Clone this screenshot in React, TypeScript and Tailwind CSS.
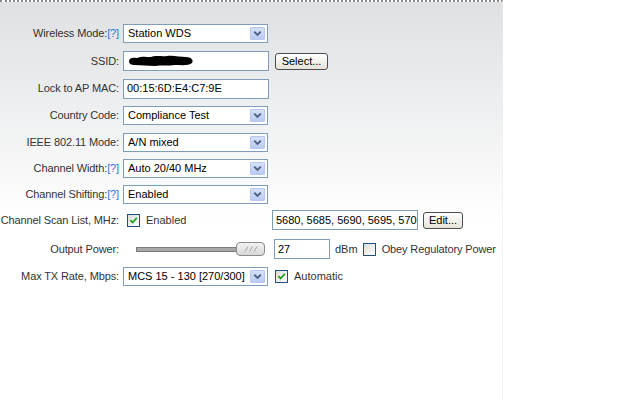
import React from 'react';

const font = { fontFamily: '"Liberation Sans", Arial, sans-serif' };

const Help = () => <span className="text-[#2f7ad0]">[?]</span>;

const Label: React.FC<{ children: React.ReactNode }> = ({ children }) => (
  <div className="w-[123px] shrink-0 pr-[4px] text-right text-[#333] whitespace-nowrap tracking-[-0.12px]">{children}</div>
);

const Arrow = () => (
  <div className="absolute right-[2px] top-[2px] bottom-[2px] w-[15px] rounded-[1px] border border-[#b7c8ec] bg-gradient-to-b from-[#d6e1f8] to-[#b9cbf1] flex items-center justify-center">
    <svg width="9" height="7" viewBox="0 0 9 7">
      <path d="M1.2 1.6 L4.5 4.9 L7.8 1.6" fill="none" stroke="#4d6185" strokeWidth="2" />
    </svg>
  </div>
);

const Select: React.FC<{ value: string }> = ({ value }) => (
  <div className="relative w-[145px] h-[19px] border border-[#7f9db9] bg-white flex items-center pl-[4px] text-black whitespace-nowrap">
    {value}
    <Arrow />
  </div>
);

const Input: React.FC<{ w: string; children?: React.ReactNode }> = ({ w, children }) => (
  <div className={`${w} h-[20px] border border-[#7f9db9] bg-white flex items-center pl-[3px] text-black whitespace-nowrap overflow-hidden`}>
    {children}
  </div>
);

const Button: React.FC<{ w: string; label: string }> = ({ w, label }) => (
  <div className={`${w} h-[17px] rounded-[3px] border border-[#4a4f55] bg-gradient-to-b from-white to-[#e6e3d6] flex items-center justify-center text-black`}>
    {label}
  </div>
);

const Check: React.FC<{ checked?: boolean }> = ({ checked }) => (
  <div className="w-[13px] h-[13px] shrink-0 border border-[#1c5180] bg-gradient-to-br from-[#dcdcd7] to-white flex items-center justify-center">
    {checked && (
      <svg width="9" height="9" viewBox="0 0 9 9">
        <path d="M1.3 4.2 L3.6 6.5 L7.8 1.8" fill="none" stroke="#21a121" strokeWidth="1.8" />
      </svg>
    )}
  </div>
);

export default function App() {
  return (
    <div className="w-[640px] h-[400px] bg-white text-[11px] leading-[13px]" style={font}>
      <div className="w-[503px] h-[400px] border-t-2 border-dotted border-[#8a8a8a] border-r border-r-[#ececec] bg-[linear-gradient(to_bottom,#dee0e2,#ffffff_220px)] pt-[17px]">
        <div className="flex items-center h-[28px]">
          <Label>Wireless Mode:<Help /></Label>
          <Select value="Station WDS" />
        </div>
        <div className="flex items-center h-[28px]">
          <Label>SSID:</Label>
          <Input w="w-[146px]">
            {/* redacted SSID scribble */}
            <svg width="66" height="12" viewBox="0 0 66 12" className="ml-[1px]">
              <path d="M1 6 C1 3 5 2 9 3 C13 1 19 2 23 2 C28 0 34 2 39 1 C45 0 52 2 58 2 C63 2 66 5 64 8 C61 11 53 10 47 10 C40 11 33 10 27 11 C20 11 13 10 7 10 C3 10 1 9 1 6 Z" fill="#000" />
            </svg>
          </Input>
          <div className="ml-[6px]"><Button w="w-[53px]" label="Select..." /></div>
        </div>
        <div className="flex items-center h-[27px]">
          <Label>Lock to AP MAC:</Label>
          <Input w="w-[146px]">00:15:6D:E4:C7:9E</Input>
        </div>
        <div className="flex items-center h-[27px]">
          <Label>Country Code:</Label>
          <Select value="Compliance Test" />
        </div>
        <div className="flex items-center h-[26px]">
          <Label>IEEE 802.11 Mode:</Label>
          <Select value="A/N mixed" />
        </div>
        <div className="flex items-center h-[26px]">
          <Label>Channel Width:<Help /></Label>
          <Select value="Auto 20/40 MHz" />
        </div>
        <div className="flex items-center h-[26px]">
          <Label>Channel Shifting:<Help /></Label>
          <Select value="Enabled" />
        </div>
        <div className="flex items-center h-[26px]">
          <Label>Channel Scan List, MHz:</Label>
          <div className="w-[149px] flex items-center pl-[4px]">
            <Check checked />
            <span className="ml-[6px] text-[#333]">Enabled</span>
          </div>
          <Input w="w-[146px]">5680, 5685, 5690, 5695, 5700</Input>
          <div className="ml-[5px]"><Button w="w-[40px]" label="Edit..." /></div>
        </div>
        <div className="flex items-center h-[32px]">
          <Label>Output Power:</Label>
          <div className="ml-[13px] flex items-center">
            <div className="w-[102px] h-[5px] border border-[#7a7a7a] bg-[#a8a8a8]" />
            <div className="-ml-[2px] w-[29px] h-[14px] rounded-[4px] border border-[#8a8a8a] bg-gradient-to-b from-[#f2f2f2] to-[#d8d8d8] flex items-center justify-center">
              <svg width="14" height="6" viewBox="0 0 14 6">
                <path d="M1 5.5 L4 0.5 M5.5 5.5 L8.5 0.5 M10 5.5 L13 0.5" stroke="#a0a0a0" strokeWidth="1" />
              </svg>
            </div>
          </div>
          <div className="ml-[9px]"><Input w="w-[56px]">27</Input></div>
          <span className="ml-[5px] text-[#333]">dBm</span>
          <div className="ml-[5px]"><Check /></div>
          <span className="ml-[6px] text-[#333] whitespace-nowrap tracking-[-0.12px]">Obey Regulatory Power</span>
        </div>
        <div className="flex items-center h-[22px]">
          <Label>Max TX Rate, Mbps:</Label>
          <Select value="MCS 15 - 130 [270/300]" />
          <div className="ml-[7px]"><Check checked /></div>
          <span className="ml-[6px] text-[#333]">Automatic</span>
        </div>
      </div>
    </div>
  );
}
